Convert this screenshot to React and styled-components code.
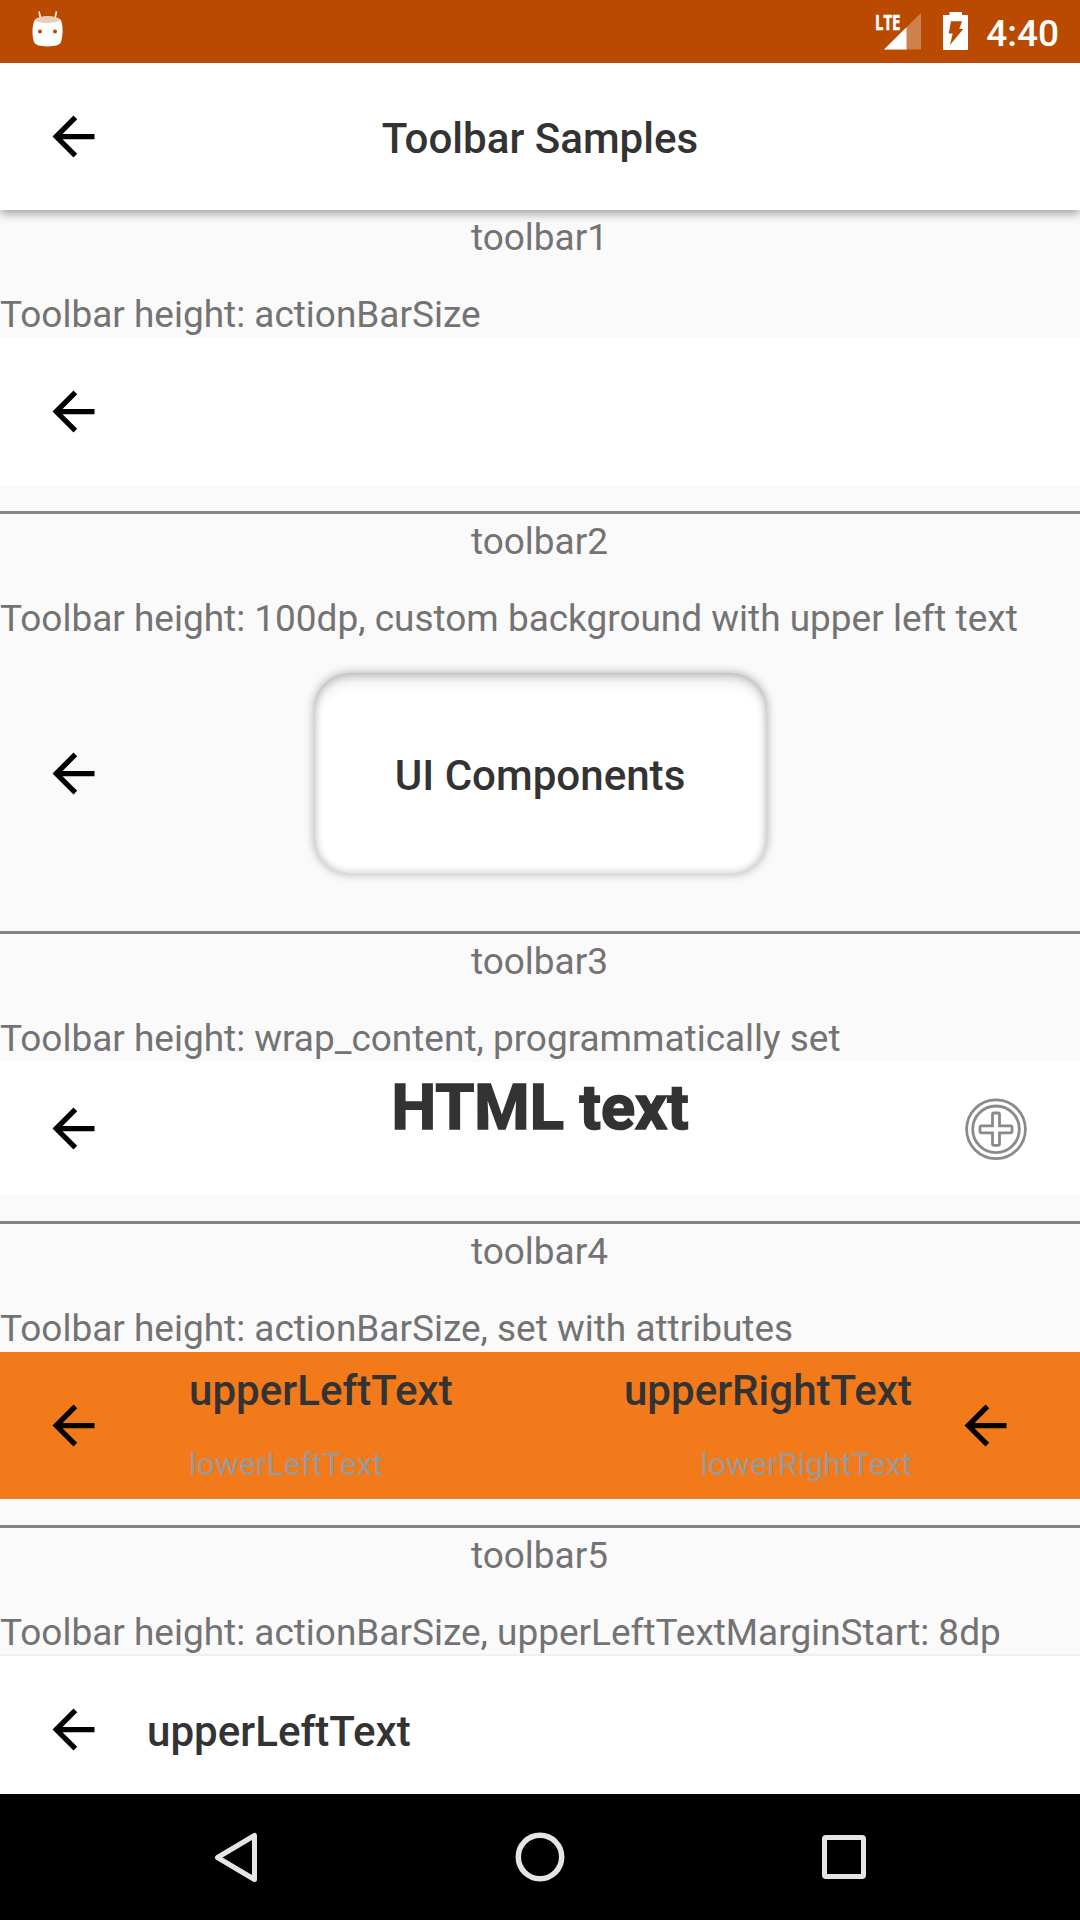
import React from "react";
import styled, { createGlobalStyle } from "styled-components";

const Global = createGlobalStyle`
  * { box-sizing: border-box; }
  html, body { margin: 0; padding: 0; background: #fafafa; }
  body { font-family: Roboto, "Liberation Sans", sans-serif; overflow: hidden; }
`;

const Screen = styled.div`
  width: 1080px;
  height: 1920px;
  display: flex;
  flex-direction: column;
  overflow: hidden;
  background: #fafafa;
`;

const StatusBar = styled.div`
  flex: none;
  height: 63px;
  display: flex;
  align-items: flex-start;
  justify-content: space-between;
  padding: 0 21px 0 32px;
  background: #b94a00;
`;

const StatusIcons = styled.div`
  display: flex;
  align-items: flex-start;
`;

const Clock = styled.div`
  margin-left: 18px;
  padding-top: 12px;
  font-size: 37px;
  font-weight: 500;
  line-height: 43px;
  color: #fff;
`;

const Toolbar = styled.div`
  flex: none;
  height: ${(p) => p.$height || 147}px;
  display: grid;
  grid-template-columns: 105px 1fr 126px;
  align-items: center;
  padding-left: 42px;
  background: ${(p) => p.$bg || "#fff"};
  box-shadow: ${(p) => p.$shadow || "none"};
  clip-path: ${(p) => (p.$shadow ? "inset(-2px 0 -20px 0)" : "none")};
`;

const AppBar = styled(Toolbar)`
  position: relative;
  z-index: 1;
  clip-path: inset(0 0 -20px 0);
`;

const IconSlot = styled.div`
  display: flex;
  align-items: center;
  height: 84px;
`;

const Center = styled.div`
  display: flex;
  justify-content: center;
  align-self: ${(p) => p.$align || "center"};
  margin-left: -21px;
`;

const Title = styled.div`
  font-size: 42.1px;
  font-weight: 500;
  line-height: 50px;
  color: #333;
  white-space: nowrap;
  padding-top: ${(p) => p.$top || 0}px;
`;

const Headline = styled(Title)`
  font-size: 63.2px;
  font-weight: 700;
  padding-top: 20px;
  -webkit-text-stroke: 1.6px #333;
`;

const Sub = styled.div`
  font-size: 31.9px;
  line-height: 37px;
  color: #999;
  white-space: nowrap;
`;

const TextColumns = styled.div`
  display: flex;
  justify-content: space-between;
  align-self: stretch;
  padding: ${(p) => p.$padding};
`;

const TextColumn = styled.div`
  display: flex;
  flex-direction: column;
  gap: 30px;
  align-items: ${(p) => (p.$end ? "flex-end" : "flex-start")};
`;

const Panel = styled.div`
  width: 453px;
  height: 201px;
  margin-bottom: 1px;
  display: flex;
  align-items: center;
  justify-content: center;
  border-radius: 36px;
  background: #fff;
  box-shadow: 0 0 8px 1px rgba(0, 0, 0, 0.25), inset 0 0 7px 2px rgba(0, 0, 0, 0.18), inset 0 9px 13px -2px rgba(0, 0, 0, 0.14);
`;

const Content = styled.div`
  flex: 1;
  min-height: 0;
  overflow: hidden;
`;

const Section = styled.section`
  display: flex;
  flex-direction: column;
`;

const Caption = styled.div`
  height: 50px;
  padding-top: 5px;
  font-size: 36.97px;
  line-height: 43px;
  color: #737373;
  white-space: nowrap;
`;

const SectionName = styled(Caption)`
  height: 78px;
  padding: 6px 1px 0 0;
  text-align: center;
`;

const Divider = styled.div`
  height: 3px;
  margin-top: 26px;
  background: #848484;
`;

const NavBar = styled.nav`
  flex: none;
  height: 126px;
  display: flex;
  justify-content: center;
  gap: 178px;
  background: #000;
`;

const NavButton = styled.div`
  width: 126px;
  height: 126px;
`;

const LteLabel = styled.div`
  font-family: "Open Sans", Roboto, sans-serif;
  font-size: 22px;
  font-weight: 700;
  line-height: 20px;
  color: #fff;
  padding-top: 11px;
  width: 9px;
  transform: scaleX(0.68);
  transform-origin: left;
  white-space: nowrap;
  -webkit-text-stroke: 0.6px #fff;
`;

const Arrow = () => (
  <svg width="63" height="63" viewBox="0 0 24 24">
    <path d="M20 11H7.83l5.59-5.59L12 4l-8 8 8 8 1.41-1.41L7.83 13H20v-2z" />
  </svg>
);

const Plus = () => (
  <svg width="84" height="84" viewBox="0 0 84 84" fill="none" stroke="#8a8a8a" strokeWidth="2.8">
    <circle cx="42" cy="42.3" r="29.4" />
    <circle cx="42" cy="42.3" r="23.3" />
    <path d="M40 26h4q1.500 0 1.500 1.500V38.800h11q1.500 0 1.500 1.500v4q0 1.500-1.500 1.500h-11v11q0 1.500-1.500 1.500h-4q-1.500 0-1.500-1.500v-11h-11q-1.500 0-1.500-1.500v-4q0-1.500 1.500-1.500h11V27.500q0-1.500 1.500-1.500z" />
  </svg>
);

const Droid = () => (
  <svg width="32" height="63" viewBox="0 0 32 63">
    <path d="M7 11.500l1.600 7M24.500 11.500l-1.600 7" stroke="#fff" strokeWidth="1.600" />
    <path d="M3 19.500Q15.500 13 28.500 19.500Q31 24 30.500 33Q30 40 28.500 43Q27 46 15.500 46.500Q4 46 2.500 43Q.800 40 .500 33Q.300 24 3 19.500z" fill="#fff" />
    <ellipse cx="15.600" cy="19.700" rx="12" ry="3.400" fill="#eccdb8" />
    <circle cx="8" cy="31.500" r="2" fill="#b94a00" />
    <circle cx="23" cy="31.500" r="2" fill="#b94a00" />
  </svg>
);

const Signal = () => (
  <svg width="37" height="63" viewBox="0 0 37 63">
    <path d="M37 13V49.500H0z" fill="#fff" fillOpacity=".3" />
    <path d="M22.500 27.300V49.500H0z" fill="#fff" />
  </svg>
);

const Battery = () => (
  <svg width="47" height="63" viewBox="0 0 47 63">
    <path d="M22 15h6.500v-3h12.500v3h6v35H22z" fill="#fff" />
    <path d="M30 21.300h11l-2.700 7.600h4L29 45l2.700-11.500h-4z" fill="#b94a00" />
  </svg>
);

export default function App() {
  return (
    <Screen>
      <Global />
      <StatusBar>
        <Droid />
        <StatusIcons>
          <LteLabel>LTE</LteLabel>
          <Signal />
          <Battery />
          <Clock>4:40</Clock>
        </StatusIcons>
      </StatusBar>
      <AppBar $shadow="0 3px 10px rgba(0, 0, 0, 0.4)">
        <IconSlot><Arrow /></IconSlot>
        <Center $align="start"><Title $top={51}>Toolbar Samples</Title></Center>
      </AppBar>
      <Content>
        <Section>
          <SectionName>toolbar1</SectionName>
          <Caption>Toolbar height: actionBarSize</Caption>
          <Toolbar><IconSlot><Arrow /></IconSlot></Toolbar>
          <Divider />
        </Section>
        <Section>
          <SectionName>toolbar2</SectionName>
          <Caption>Toolbar height: 100dp, custom background with upper left text</Caption>
          <Toolbar $height={263} $bg="transparent">
            <IconSlot><Arrow /></IconSlot>
            <Center><Panel><Title $top={5}>UI Components</Title></Panel></Center>
          </Toolbar>
          <Divider />
        </Section>
        <Section>
          <SectionName>toolbar3</SectionName>
          <Caption>Toolbar height: wrap_content, programmatically set</Caption>
          <Toolbar $height={133}>
            <IconSlot><Arrow /></IconSlot>
            <Center $align="start"><Headline>HTML text</Headline></Center>
            <IconSlot><Plus /></IconSlot>
          </Toolbar>
          <Divider />
        </Section>
        <Section>
          <SectionName>toolbar4</SectionName>
          <Caption>Toolbar height: actionBarSize, set with attributes</Caption>
          <Toolbar $bg="#f37a1b">
            <IconSlot><Arrow /></IconSlot>
            <TextColumns $padding="14px 42px 0 42px">
              <TextColumn>
                <Title>upperLeftText</Title>
                <Sub>lowerLeftText</Sub>
              </TextColumn>
              <TextColumn $end>
                <Title>upperRightText</Title>
                <Sub>lowerRightText</Sub>
              </TextColumn>
            </TextColumns>
            <IconSlot><Arrow /></IconSlot>
          </Toolbar>
          <Divider />
        </Section>
        <Section>
          <SectionName>toolbar5</SectionName>
          <Caption>Toolbar height: actionBarSize, upperLeftTextMarginStart: 8dp</Caption>
          <Toolbar $shadow="0 0 0 2px #f0f0f0">
            <IconSlot><Arrow /></IconSlot>
            <TextColumns $padding="51px 0 0"><Title>upperLeftText</Title></TextColumns>
          </Toolbar>
        </Section>
      </Content>
      <NavBar>
        <NavButton>
          <svg width="126" height="126" viewBox="0 0 126 126" fill="none" stroke="#e5e5e5" strokeWidth="5" strokeLinejoin="round">
            <path d="M81.500 41.500V85.500L44.500 63.500z" />
          </svg>
        </NavButton>
        <NavButton>
          <svg width="126" height="126" viewBox="0 0 126 126" fill="none" stroke="#e5e5e5" strokeWidth="5.500">
            <circle cx="63" cy="63" r="21.700" />
          </svg>
        </NavButton>
        <NavButton>
          <svg width="126" height="126" viewBox="0 0 126 126" fill="none" stroke="#e5e5e5" strokeWidth="5">
            <rect x="43.500" y="43.500" width="39" height="39" rx="1.500" />
          </svg>
        </NavButton>
      </NavBar>
    </Screen>
  );
}
